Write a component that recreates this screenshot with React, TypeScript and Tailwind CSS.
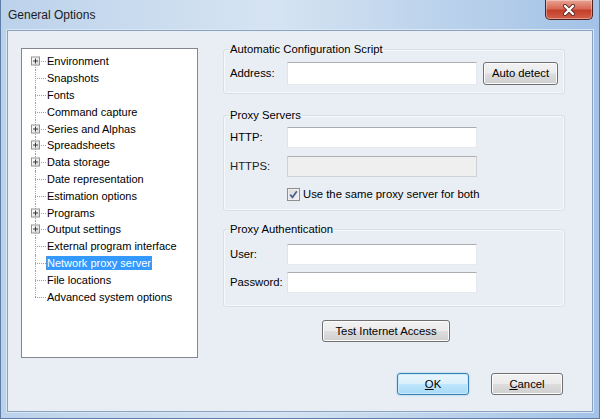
import React from "react";

const treeItems = [
  { label: "Environment", plus: true },
  { label: "Snapshots", plus: false },
  { label: "Fonts", plus: false },
  { label: "Command capture", plus: false },
  { label: "Series and Alphas", plus: true },
  { label: "Spreadsheets", plus: true },
  { label: "Data storage", plus: true },
  { label: "Date representation", plus: false },
  { label: "Estimation options", plus: false },
  { label: "Programs", plus: true },
  { label: "Output settings", plus: true },
  { label: "External program interface", plus: false },
  { label: "Network proxy server", plus: false, selected: true },
  { label: "File locations", plus: false },
  { label: "Advanced system options", plus: false },
];

const btn =
  "flex items-center justify-center rounded-[3px] border border-[#707070] bg-[linear-gradient(to_bottom,#f2f2f2_0%,#ebebeb_48%,#dddddd_52%,#cfcfcf_100%)] shadow-[inset_0_0_0_1px_#fbfbfb] text-black";

const TextBox = ({ h = 21, disabled = false }: { h?: number; disabled?: boolean }) => (
  <div
    className={
      "w-[190px] border " +
      (disabled
        ? "bg-[#efefef] border-[#cfd2d4] border-t-[#adb2b5]"
        : "bg-white border-[#e3e9ef] border-t-[#abadb3] border-l-[#e2e3ea]") +
      (h === 23 ? " h-[23px]" : " h-[21px]")
    }
  />
);

const TreeRow = ({
  item,
  first,
  last,
}: {
  item: { label: string; plus: boolean; selected?: boolean };
  first: boolean;
  last: boolean;
}) => (
  <div className="flex items-center h-[16.8px]">
    <div className="relative w-[24px] h-full shrink-0">
      {/* connector lines */}
      <div
        className={
          "absolute left-[13px] border-l border-dotted border-[#a0a0a0] " +
          (first ? "top-1/2 bottom-0" : last ? "top-0 h-1/2" : "top-0 bottom-0")
        }
      />
      <div className="absolute left-[13px] right-0 top-1/2 border-t border-dotted border-[#a0a0a0]" />
      {item.plus && (
        <div className="absolute left-[9px] top-1/2 -translate-y-1/2 w-[9px] h-[9px] border border-[#919191] bg-[linear-gradient(to_bottom_right,#ffffff,#d8d8d8)] flex items-center justify-center">
          <svg width="7" height="7" viewBox="0 0 7 7">
            <path d="M1 3.5H6M3.5 1V6" stroke="#3a3a3a" strokeWidth="1" />
          </svg>
        </div>
      )}
    </div>
    <span
      className={
        "h-[14px] leading-[14px] px-[1px] whitespace-nowrap " +
        (item.selected ? "bg-[#3399ff] text-white outline-1 outline-dotted outline-[#6b8fb8] -outline-offset-1" : "text-black")
      }
    >
      {item.label}
    </span>
  </div>
);

export default function App() {
  return (
    <div className="w-[600px] h-[419px] flex flex-col overflow-hidden bg-[linear-gradient(to_right,#bcd2eb,#d6e4f2_45%,#a3c2e6)] text-[11.3px] font-['Liberation_Sans',Arial,sans-serif] text-black border-l border-r border-b border-[#5d7ea6]">
      {/* title bar */}
      <div className="h-[30px] flex items-start justify-between shrink-0">
        <div className="pl-[7px] pt-[8px] text-[12px] leading-[14px] text-[#1b1b1b]">General Options</div>
        <div className="mr-[6px] w-[48px] h-[20px] rounded-b-[5px] border border-t-0 border-[#4e2420] bg-[linear-gradient(to_bottom,#e9a393_0%,#d86a57_45%,#c43f2a_55%,#d2604a_100%)] shadow-[inset_0_0_0_1px_rgba(255,255,255,0.35)] flex items-center justify-center">
          <svg width="14" height="12" viewBox="0 0 14 12">
            <path d="M3 2L11 10M11 2L3 10" stroke="#5a2a22" strokeWidth="4" strokeLinecap="round" />
            <path d="M3 2L11 10M11 2L3 10" stroke="#ffffff" strokeWidth="2.4" strokeLinecap="round" />
          </svg>
        </div>
      </div>

      {/* client area */}
      <div className="mx-[6px] h-[382px] border border-[#8aa2bf] bg-[#e9eef4] flex items-start pl-[13px] pt-[11px] shadow-[0_0_0_1px_#d9e6f3]">
        {/* tree */}
        <div className="mt-[6px] w-[177px] h-[310px] shrink-0 bg-white border border-[#828790] pt-[4px] pl-0 text-[11px]">
          {treeItems.map((item, i) => (
            <TreeRow key={item.label} item={item} first={i === 0} last={i === treeItems.length - 1} />
          ))}
        </div>

        {/* right side */}
        <div className="ml-[25px] w-[342px] flex flex-col">
          <fieldset className="border border-[#d5dfe5] rounded-[3px] shadow-[inset_0_0_0_1px_#f6f9fc] pl-[6px] pt-[6px] pb-[8px]">
            <legend className="leading-[14px] px-[1px] -ml-[1px]">Automatic Configuration Script</legend>
            <div className="flex items-center">
              <div className="w-[57px]">Address:</div>
              <TextBox h={23} />
              <button className={btn + " ml-[6px] w-[75px] h-[23px]"}>Auto detect</button>
            </div>
          </fieldset>

          <fieldset className="mt-[14px] border border-[#d5dfe5] rounded-[3px] shadow-[inset_0_0_0_1px_#f6f9fc] pl-[6px] pt-[5px] pb-[9px]">
            <legend className="leading-[14px] px-[1px] -ml-[1px]">Proxy Servers</legend>
            <div className="flex items-center">
              <div className="w-[57px]">HTTP:</div>
              <TextBox />
            </div>
            <div className="flex items-center mt-[8px]">
              <div className="w-[57px] text-[#222]">HTTPS:</div>
              <TextBox disabled />
            </div>
            <div className="flex items-center mt-[11px] h-[13px] pl-[57px]">
              <div className="w-[13px] h-[13px] border border-[#8e8f8f] bg-[linear-gradient(to_bottom_right,#d9d9d9,#f4f4f4)] shadow-[inset_0_0_0_1px_#f0f0f0] flex items-center justify-center">
                <svg width="9" height="9" viewBox="0 0 9 9">
                  <path d="M1.2 4.6L3.5 7.3L7.8 1.2" stroke="#4a5f8f" strokeWidth="1.7" fill="none" />
                </svg>
              </div>
              <span className="ml-[3px] leading-[13px]">Use the same proxy server for both</span>
            </div>
          </fieldset>

          <fieldset className="mt-[11px] border border-[#d5dfe5] rounded-[3px] shadow-[inset_0_0_0_1px_#f6f9fc] pl-[6px] pt-[8px] pb-[13px]">
            <legend className="leading-[14px] px-[1px] -ml-[1px]">Proxy Authentication</legend>
            <div className="flex items-center">
              <div className="w-[57px]">User:</div>
              <TextBox />
            </div>
            <div className="flex items-center mt-[7px]">
              <div className="w-[57px]">Password:</div>
              <TextBox />
            </div>
          </fieldset>

          <button className={btn + " mt-[13px] ml-[99px] w-[128px] h-[22px]"}>Test Internet Access</button>

          <div className="mt-[31px] flex justify-end gap-[22px] pr-[2px]">
            <button className="flex items-center justify-center w-[72px] h-[22px] rounded-[3px] border border-[#3c7fb1] bg-[linear-gradient(to_bottom,#eaf6fd_0%,#d9f0fc_48%,#bee6fd_52%,#a7d9f5_100%)] shadow-[inset_0_0_0_1px_#c8eafb,0_0_2px_#7cc6f2]">
              <span>
                <span className="underline">O</span>K
              </span>
            </button>
            <button className={btn + " w-[72px] h-[22px]"}>
              <span>
                <span className="underline">C</span>ancel
              </span>
            </button>
          </div>
        </div>
      </div>
    </div>
  );
}
